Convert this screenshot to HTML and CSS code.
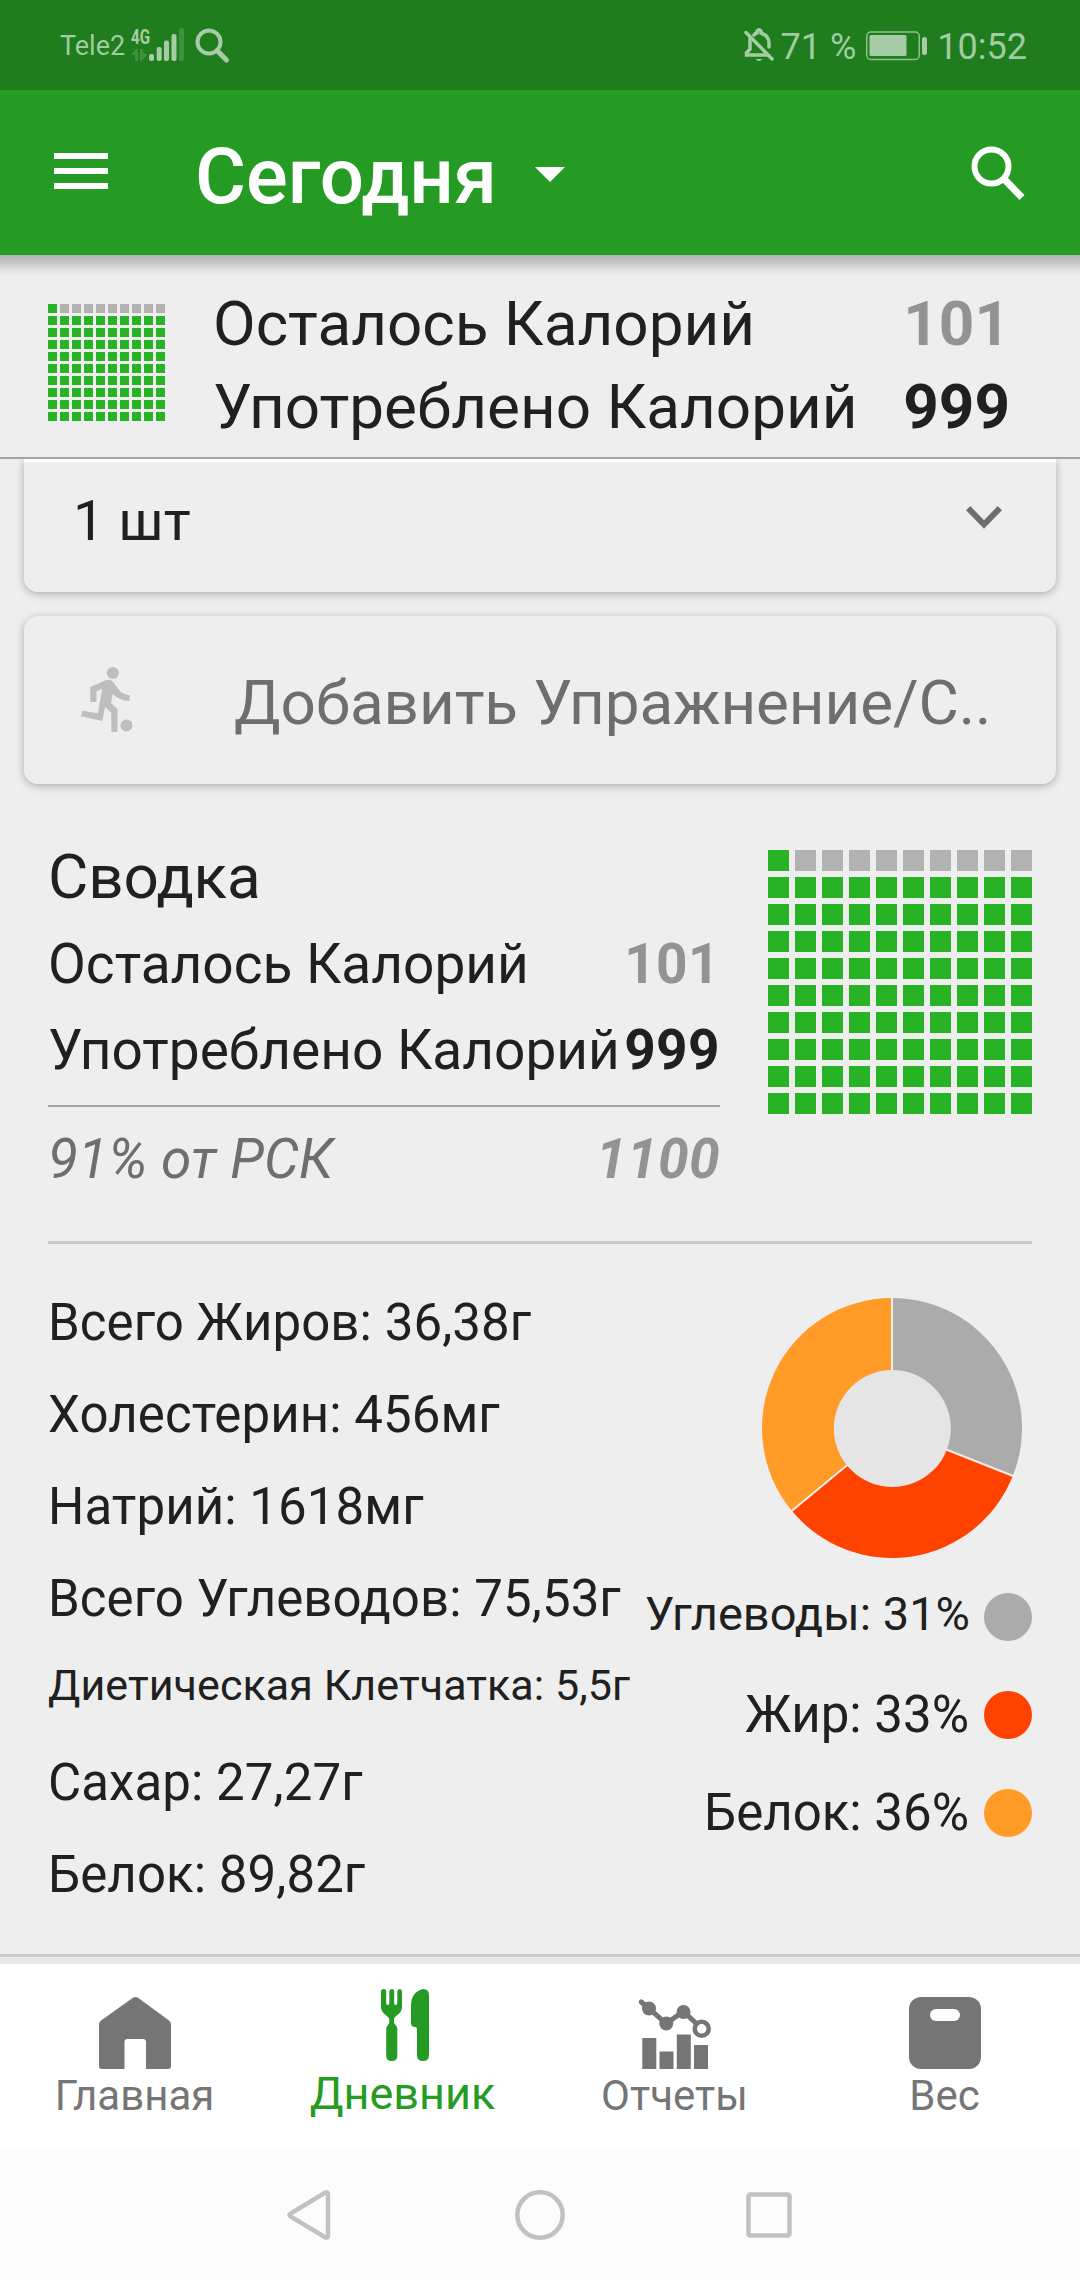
FILE: index.html
```
<!DOCTYPE html>
<html lang="ru">

<head>
    <meta charset="UTF-8">
    <meta name="viewport" content="width=device-width, initial-scale=1.0">
    <title>Дневник</title>
    <link rel="stylesheet" href="styles.css">
</head>

<body>

    <div class="status">
        <span class="carrier">Tele2</span>
        <svg class="signal" width="53" height="34" viewBox="0 0 53 34">
            <text x="0" y="15.500" class="net" textLength="19" lengthAdjust="spacingAndGlyphs">4G</text>
            <path d="M0 27 L5 21 H7 V33 H4 V27 Z M9 21 H12 V24 L16 27 L10 33 H9 Z" opacity="0.25" />
            <rect x="18" y="26" width="5" height="7" rx="2" />
            <rect x="25.700" y="19" width="5" height="14" rx="2" />
            <rect x="33" y="12.500" width="5" height="20.500" rx="2" />
            <rect x="40.500" y="6" width="5" height="27" rx="2" />
            <rect x="48" y="0" width="5" height="33" rx="2" opacity="0.25" />
        </svg>
        <svg class="status-search" width="34" height="34" viewBox="0 0 34 34">
            <circle cx="13" cy="14" r="11.500" />
            <path d="M21 22.500 L30.500 32" stroke-width="5" />
        </svg>
        <div class="status-right">
            <svg width="30" height="34" viewBox="0 0 30 34" class="bell">
                <path d="M6 10 V21 L2.500 25 V27 H24 M10 7 Q11 5.500 13 5 V3 Q15 0.500 17 3 V5 Q25 8 25 15 V19" />
                <path d="M2 4.500 L28 31" />
                <path d="M11.500 31 H18.500 Q15 35 11.500 31 Z" class="clapper" />
            </svg>
            <span class="percent">71 %</span>
            <svg width="61" height="34" viewBox="0 0 61 34" class="battery">
                <rect x="0.750" y="4" width="52.500" height="27.500" rx="4" fill="none" stroke="#8fc08e" stroke-width="1.500" />
                <rect x="3.500" y="7" width="37" height="21" rx="1.500" />
                <rect x="56" y="9" width="5" height="18" rx="2.500" />
            </svg>
            <span class="time">10:52</span>
        </div>
    </div>

    <div class="header">
        <div class="burger">
            <i></i>
            <i></i>
            <i></i>
        </div>
        <h1>Сегодня</h1>
        <div class="caret"></div>
        <svg class="search" width="54" height="54" viewBox="0 0 54 54">
            <circle cx="20.500" cy="20.500" r="17" />
            <path d="M34 34 L51 51.500" stroke-width="7" />
            <path d="M31 31 L37 37" stroke-width="4" />
        </svg>
    </div>

    <div class="panel">
        <div class="cells small"></div>
        <div class="panel-rows">
            <div class="row"><span>Осталось Калорий</span><b class="grey">101</b></div>
            <div class="row"><span>Употреблено Калорий</span><b>999</b></div>
        </div>
    </div>

    <div class="content">
        <div class="card portion">
            <span>1 шт</span>
            <svg width="36" height="23" viewBox="0 0 36 23">
                <path d="M2.200 2.200 L18 18.500 L33.800 2.200" />
            </svg>
        </div>

        <div class="card exercise">
            <svg width="52" height="66" viewBox="0 0 52 66">
                <circle cx="31.800" cy="6" r="6" />
                <circle cx="45.400" cy="58.500" r="6" />
                <path d="M9.300 20 L24.800 13.300 Q30 11.500 33 15.700 L37.200 22 Q42 28 48.600 28.300 V34 Q38 33.500 31.700 27 L30 36.300 L36.500 42 V65 H30.300 V45.700 L24.100 40 L21.300 54 L0 49.300 L1.400 43.700 L16.900 46.300 L21.300 21.700 L15.500 24.300 V35 H9.300 Z" />
            </svg>
            <span>Добавить Упражнение/С..</span>
        </div>

        <div class="summary">
            <div class="totals">
                <h2>Сводка</h2>
                <div class="row"><span>Осталось Калорий</span><b class="grey">101</b></div>
                <div class="row"><span>Употреблено Калорий</span><b>999</b></div>
                <div class="row goal"><span>91% от РСК</span><b class="grey">1100</b></div>
            </div>
            <div class="cells big"></div>
        </div>

        <div class="nutrition">
            <div class="nutrients">
                <p>Всего Жиров: 36,38г</p>
                <p>Холестерин: 456мг</p>
                <p>Натрий: 1618мг</p>
                <p>Всего Углеводов: 75,53г</p>
                <p class="sub">Диетическая Клетчатка: 5,5г</p>
                <p>Сахар: 27,27г</p>
                <p>Белок: 89,82г</p>
            </div>
            <div class="chart">
                <svg id="donut" width="264" height="264" viewBox="-132 -132 264 264"></svg>
                <div class="legend">
                    <div class="item long"><span>Углеводы: 31%</span><i class="dot carbs"></i></div>
                    <div class="item"><span>Жир: 33%</span><i class="dot fat"></i></div>
                    <div class="item"><span>Белок: 36%</span><i class="dot protein"></i></div>
                </div>
            </div>
        </div>
    </div>

    <div class="tabs">
        <div class="tab">
            <svg width="72" height="72" viewBox="0 0 72 72">
                <path d="M34 0.800 Q36.500 -0.800 39 0.800 L70 23.500 Q72 25 72 27.500 V69 Q72 72 69 72 H47 V45 Q47 42 44 42 H28.500 Q25.500 42 25.500 45 V72 H3 Q0 72 0 69 V27.500 Q0 25 2 23.500 Z" />
            </svg>
            <span>Главная</span>
        </div>
        <div class="tab active">
            <svg width="48" height="72" viewBox="0 0 48 72">
                <path d="M0 2.500 Q0 0 2.600 0 Q5.200 0 5.200 2.500 V14 Q5.200 16 6.800 16 Q8.300 16 8.300 14 V2.500 Q8.300 0 10.700 0 Q13.200 0 13.200 2.500 V14 Q13.200 16 14.700 16 Q16.300 16 16.300 14 V2.500 Q16.300 0 18.700 0 Q21 0 21 2.500 V18 Q21 22 17.500 25 L14 28 Q13 29 13 30.500 V34 L15 36.500 Q16.300 38 16.300 40 V67 Q16.300 72 10.700 72 Q5.200 72 5.200 67 V40 Q5.200 38 6.500 36.500 L8.300 34 V30.500 Q8.300 29 7 28 L3.500 25 Q0 22 0 18 Z" />
                <path d="M42 0 Q48 0 48 6 V66 Q48 72 42 72 Q36 72 36 66 V40 Q36 38 34 38 L32.500 37.700 Q30 37 30 34.500 V17 Q30 3 42 0 Z" />
            </svg>
            <span>Дневник</span>
        </div>
        <div class="tab">
            <svg width="72" height="72" viewBox="0 0 72 72">
                <path d="M2.200 5 L10 11.500 L27 26.500 L44.500 14.500 L62.500 31.500" fill="none" stroke="#757575" stroke-width="5" stroke-linecap="round" />
                <circle cx="10" cy="11.500" r="7" />
                <circle cx="27.300" cy="26.500" r="7" />
                <circle cx="44.500" cy="15" r="7" />
                <circle cx="62.700" cy="31.800" r="7" fill="#fff" stroke="#757575" stroke-width="4.500" />
                <rect x="3.300" y="41" width="14" height="31" />
                <rect x="20.500" y="54.500" width="14" height="17.500" />
                <rect x="37.800" y="37.500" width="14" height="34.500" />
                <rect x="55" y="48" width="14" height="24" />
            </svg>
            <span>Отчеты</span>
        </div>
        <div class="tab">
            <svg width="72" height="72" viewBox="0 0 72 72">
                <rect width="72" height="72" rx="12" />
                <rect x="21" y="12" width="30" height="12" rx="6" fill="#fff" />
            </svg>
            <span>Вес</span>
        </div>
    </div>

    <div class="system">
        <svg width="44" height="50" viewBox="0 0 44 50">
            <path d="M38 2.800 Q41 1.500 41 4.500 V45.500 Q41 48.500 38 47.200 L3.500 26.500 Q1.500 25 3.500 23.500 Z" />
        </svg>
        <svg width="50" height="50" viewBox="0 0 50 50">
            <circle cx="25" cy="25" r="22.700" />
        </svg>
        <svg width="46" height="46" viewBox="0 0 46 46">
            <rect x="2.500" y="2.500" width="41" height="41" rx="2" />
        </svg>
    </div>

    <script>

        // one cell per percent, the top row is filled last
        const filled = 91;
        document.querySelectorAll(".cells").forEach(box => {
            for (let i = 0; i < 100; i++) {
                const cell = document.createElement("i");
                if (i >= filled - 90 && i < 10) {
                    cell.className = "empty";
                }
                box.appendChild(cell);
            }
        });

        function point(r, percent) {
            const a = percent / 100 * Math.PI * 2;
            return (r * Math.sin(a)).toFixed(2) + " " + (-r * Math.cos(a)).toFixed(2);
        }

        const parts = [[31, "#ababab"], [33, "#ff4200"], [36, "#ff9b26"]];
        let start = 0;
        let shapes = "";
        let lines = "";
        parts.forEach(([value, color]) => {
            const end = start + value;
            shapes += `<path d="M0 0 L${point(130, start)} A130 130 0 0 1 ${point(130, end)} Z" fill="${color}"/>`;
            lines += `<path d="M0 0 L${point(131, end)}" stroke="#f3f0ec" stroke-width="2"/>`;
            start = end;
        });
        document.querySelector("#donut").innerHTML = shapes + lines + '<circle cx="0.3" cy="0.5" r="58.5" fill="#e5e5e5"/>';

    </script>
</body>

</html>
```
FILE: styles.css
```
* {
    box-sizing: border-box;
}

body {
    margin: 0;
    width: 1080px;
    height: 2280px;
    display: flex;
    flex-direction: column;
    overflow: hidden;
    background-color: #eee;
    color: #202020;
    font-family: Roboto, sans-serif;
    white-space: nowrap;
}

h1, h2, p {
    margin: 0;
    font-weight: 400;
}

svg {
    display: block;
    flex-shrink: 0;
    overflow: visible;
}

.grey {
    color: #939393;
}

/* status bar */

.status {
    height: 90px;
    display: flex;
    align-items: center;
    padding: 0 53px 0 60px;
    background-color: #1f7d1e;
    color: #a1cba0;
    fill: #a5cca4;
}

.carrier {
    width: 71px;
    padding-top: 2px;
    font-size: 27px;
}

.net {
    font-size: 21px;
    font-weight: 700;
}

.status-search {
    margin-left: 12px;
    fill: none;
    stroke: #a5cca4;
    stroke-width: 4;
    stroke-linecap: round;
}

.status-right {
    display: flex;
    align-items: center;
    margin-left: auto;
    font-size: 36px;
}

.percent,
.time {
    padding-top: 3px;
}

.bell {
    margin-right: 7px;
    fill: none;
    stroke: #a5cca4;
    stroke-width: 3.5;
    stroke-linecap: round;
}

.clapper {
    fill: #a5cca4;
    stroke: none;
}

.battery {
    margin: 0 10px;
}

/* app bar */

.header {
    height: 165px;
    display: flex;
    align-items: center;
    padding: 0 55px 0 54px;
    background-color: #269b24;
}

.burger {
    display: flex;
    flex-direction: column;
    gap: 9px;
    margin: 0 87px 3px 0;
}

.burger i {
    width: 54px;
    height: 6px;
    background-color: #fff;
}

h1 {
    padding-top: 8px;
    color: #fff;
    font-size: 78px;
    font-weight: 500;
}

.caret {
    margin: 4px 0 0 38px;
    border: 15px solid transparent;
    border-top-color: #fff;
    border-bottom: 0;
}

.search {
    margin-left: auto;
    fill: none;
    stroke: #fff;
    stroke-width: 6;
}

/* calories panel */

.panel {
    height: 204px;
    display: flex;
    padding: 27px 70px 0 48px;
    border-bottom: 2px solid #a3a3a3;
    background: linear-gradient(#b2b2b2, #c6c6c6 8px, #e2e2e2 15px, #eee 21px);
}

.panel-rows {
    flex: 1;
    margin-left: 48px;
    font-size: 62px;
    line-height: 83px;
}

.row {
    display: flex;
    justify-content: space-between;
}

.cells {
    display: grid;
    align-content: start;
}

.cells i {
    background-color: #28b327;
}

.cells .empty {
    background-color: #b2b2b2;
}

.small {
    grid-template-columns: repeat(10, 9px);
    grid-auto-rows: 9px;
    gap: 3px;
    padding-top: 22px;
}

.big {
    grid-template-columns: repeat(10, 21px);
    grid-auto-rows: 21px;
    gap: 6px;
    padding-top: 16px;
}

/* cards */

.content {
    height: 1498px;
    border-bottom: 3px solid #c9c9c9;
    overflow: hidden;
}

.card {
    margin: 0 24px;
    display: flex;
    align-items: center;
    border-radius: 14px;
    background-color: #eee;
    box-shadow: 0 2px 8px rgba(0, 0, 0, 0.28);
}

.portion {
    height: 133px;
    justify-content: space-between;
    padding: 0 54px 16px 49px;
    border-top: 3px solid #fff;
    border-radius: 0 0 14px 14px;
    font-size: 56px;
}

.portion span {
    padding-top: 4px;
}

.portion svg {
    margin-bottom: 3px;
    fill: none;
    stroke: #6e6e6e;
    stroke-width: 6;
}

.exercise {
    height: 168px;
    margin-top: 24px;
    padding-left: 57px;
    color: #6e6e6e;
    font-size: 62px;
}

.exercise svg {
    fill: #bebebe;
}

.exercise span {
    margin-left: 101px;
    padding-top: 5px;
    letter-spacing: -0.1px;
}

/* summary */

.summary {
    height: 460px;
    display: flex;
    justify-content: space-between;
    margin: 0 48px;
    padding-top: 50px;
    border-bottom: 3px solid #cacaca;
}

.totals {
    width: 672px;
    font-size: 55px;
    line-height: 86px;
}

.totals b {
    letter-spacing: 0.4px;
}

h2 {
    height: 87px;
    font-size: 62px;
    letter-spacing: -0.2px;
}

.goal {
    margin-top: 12px;
    padding-top: 9px;
    border-top: 2px solid #a3a3a3;
    color: #6e6e6e;
    font-style: italic;
}

.goal span {
    letter-spacing: 0.1px;
}

/* nutrition */

.nutrition {
    display: flex;
    justify-content: space-between;
    padding: 33px 48px 0;
}

.nutrients {
    font-size: 51px;
    line-height: 92px;
    letter-spacing: 0.07px;
}

.nutrients .sub {
    height: 92px;
    font-size: 43px;
    line-height: 80px;
}

.chart {
    display: flex;
    flex-direction: column;
    align-items: flex-end;
    padding-top: 19px;
}

.chart > svg {
    margin-right: 8px;
}

.legend {
    display: flex;
    flex-direction: column;
    gap: 50px;
    margin-top: 33px;
}

.item {
    height: 48px;
    display: flex;
    justify-content: flex-end;
    gap: 15px;
    font-size: 51px;
    line-height: 48px;
}

.long {
    gap: 14px;
    font-size: 47px;
    line-height: 41px;
}

.dot {
    width: 48px;
    height: 48px;
    border-radius: 50%;
}

.carbs {
    background-color: #ababab;
}

.fat {
    background-color: #ff4200;
}

.protein {
    background-color: #ff9b26;
}

/* bottom tabs */

.tabs {
    height: 193px;
    display: flex;
    border-top: 7px solid #e7e7e7;
    background-color: #fff;
    color: #757575;
    fill: #757575;
}

.tab {
    width: 270px;
    display: flex;
    flex-direction: column;
    align-items: center;
    gap: 2px;
    padding-top: 33px;
    font-size: 42px;
    line-height: 50px;
}

.tab span {
    margin-right: 1px;
}

.active {
    gap: 8px;
    padding-top: 25px;
    color: #269b24;
    fill: #269b24;
    font-size: 45px;
}

.active span {
    margin-right: 5px;
}

.system {
    height: 130px;
    display: flex;
    align-items: center;
    padding-left: 287px;
    background-color: #fcfcfc;
    fill: none;
    stroke: #c1c1c1;
    stroke-width: 4.5;
}

.system svg {
    margin-right: 184px;
}

.system svg + svg {
    margin-right: 181px;
}
```
